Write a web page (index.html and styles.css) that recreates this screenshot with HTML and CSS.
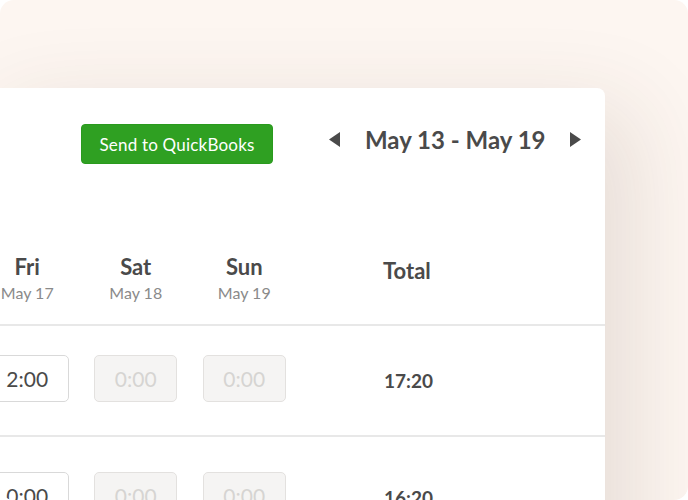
FILE: index.html
```html
<!DOCTYPE html>
<html>
<head>
<meta charset="utf-8">
<link rel="stylesheet" href="styles.css">
</head>
<body>
<div class="frame">
  <div class="card">
    <div class="toolbar">
      <button class="qb-btn">Send to QuickBooks</button>
      <div class="week-nav">
        <svg class="arrow" width="11" height="15" viewBox="0 0 11 15"><polygon points="11,0 11,15 0,7.5" fill="#4a4a4a"/></svg>
        <span class="week-label">May 13 - May 19</span>
        <svg class="arrow" width="11" height="15" viewBox="0 0 11 15"><polygon points="0,0 0,15 11,7.5" fill="#4a4a4a"/></svg>
      </div>
    </div>
    <div class="grid head">
      <div class="day"><div class="dname">Fri</div><div class="ddate">May 17</div></div>
      <div class="day"><div class="dname">Sat</div><div class="ddate">May 18</div></div>
      <div class="day"><div class="dname">Sun</div><div class="ddate">May 19</div></div>
      <div class="total-h">Total</div>
    </div>
    <div class="grid row">
      <div class="cell"><div class="time">2:00</div></div>
      <div class="cell"><div class="time off">0:00</div></div>
      <div class="cell"><div class="time off">0:00</div></div>
      <div class="total">17:20</div>
    </div>
    <div class="grid row row-next">
      <div class="cell"><div class="time">0:00</div></div>
      <div class="cell"><div class="time off">0:00</div></div>
      <div class="cell"><div class="time off">0:00</div></div>
      <div class="total">16:20</div>
    </div>
  </div>
</div>
</body>
</html>
```
FILE: styles.css
```css
html, body {
  margin: 0;
  padding: 0;
  background: #ffffff;
}
body {
  font-family: "Lato", "Open Sans", sans-serif;
  color: #4a4a4a;
}
.frame {
  width: 688px;
  height: 500px;
  border-radius: 14px;
  background: #fdf6f1;
  overflow: hidden;
  padding-top: 88px;
  box-sizing: border-box;
}
.card {
  margin-left: -27px;
  width: 632px;
  height: 520px;
  background: #ffffff;
  border-radius: 8px;
  box-shadow: 30px 20px 90px rgba(70, 50, 30, 0.12);
}
.toolbar {
  display: flex;
  align-items: center;
  padding: 36px 0 0 108px;
  height: 40px;
}
.qb-btn {
  width: 192px;
  height: 40px;
  border: 1px solid #2a9a1e;
  border-radius: 4px;
  background: #2fa022;
  color: #ffffff;
  font-family: "Lato", "Open Sans", sans-serif;
  font-size: 17px;
  letter-spacing: 0.2px;
  padding: 0;
}
.week-nav {
  display: flex;
  align-items: center;
  margin-left: 56px;
  margin-bottom: 10px;
  gap: 25px;
}
.week-label {
  font-size: 24px;
  font-weight: 700;
  color: #4a4a4a;
}
.grid {
  display: grid;
  grid-template-columns: 108.5px 108.5px 108.5px 1fr;
}
.head {
  margin-top: 90px;
  height: 72px;
  border-bottom: 2px solid #e8e8e8;
  box-sizing: border-box;
  align-items: start;
}
.day {
  text-align: center;
}
.dname {
  font-size: 22px;
  font-weight: 700;
  line-height: 26px;
  color: #4a4a4a;
}
.ddate {
  font-size: 16px;
  line-height: 22px;
  margin-top: 2px;
  color: #8a8a8a;
}
.total-h {
  padding-left: 84.5px;
  font-size: 22px;
  font-weight: 700;
  line-height: 26px;
  margin-top: 4px;
}
.row {
  height: 111px;
  padding-top: 29px;
  align-items: start;
  border-bottom: 2px solid #e8e8e8;
  box-sizing: border-box;
}
.row-next {
  padding-top: 35px;
}
.cell {
  display: flex;
  justify-content: center;
}
.time {
  width: 83px;
  height: 47px;
  box-sizing: border-box;
  border: 1px solid #d9d9d9;
  border-radius: 5px;
  display: flex;
  align-items: center;
  justify-content: center;
  font-size: 21px;
  color: #4a4a4a;
  background: #ffffff;
}
.time.off {
  background: #f5f4f3;
  border-color: #e3e1df;
  color: #d6d4d2;
}
.total {
  padding-left: 85.5px;
  font-size: 19px;
  font-weight: 700;
  line-height: 51px;
  color: #4a4a4a;
}
```
